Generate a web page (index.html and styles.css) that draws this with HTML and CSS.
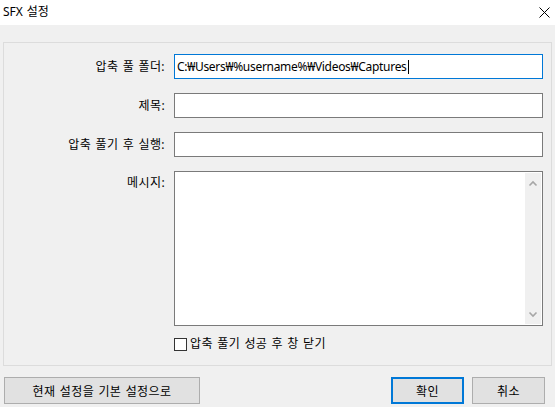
FILE: index.html
```html
<!DOCTYPE html>
<html>
<head>
  <meta charset="UTF-8">
  <title>SFX 설정</title>
  <link rel="stylesheet" href="styles.css">
</head>
<body>
  <div class="titleBar">
    <span class="title">SFX 설정</span>
    <svg class="closeIcon" width="11" height="11" viewBox="0 0 11 11">
      <path d="M0.5 0.5 L10.5 10.5 M10.5 0.5 L0.5 10.5" stroke="#000" stroke-width="1" fill="none"/>
    </svg>
  </div>

  <div class="dialog">
    <div class="groupBox">
      <div class="formGrid">
        <div class="label">압축 풀 폴더:</div>
        <div class="textBox focused">C:₩Users₩%username%₩Videos₩Captures<span class="caret"></span></div>

        <div class="label">제목:</div>
        <div class="textBox"></div>

        <div class="label">압축 풀기 후 실행:</div>
        <div class="textBox"></div>

        <div class="label labelTop">메시지:</div>
        <div class="textArea">
          <div class="scrollBar">
            <svg width="16" height="12" viewBox="0 0 16 12">
              <path d="M4.5 7.5 L8 4 L11.5 7.5" stroke="#a6a6a6" stroke-width="1.6" fill="none"/>
            </svg>
            <svg width="16" height="12" viewBox="0 0 16 12">
              <path d="M4.5 4.5 L8 8 L11.5 4.5" stroke="#a6a6a6" stroke-width="1.6" fill="none"/>
            </svg>
          </div>
        </div>
      </div>

      <div class="checkRow">
        <span class="checkBox"></span>
        <span>압축 풀기 성공 후 창 닫기</span>
      </div>
    </div>

    <div class="buttonRow">
      <div class="button wide">현재 설정을 기본 설정으로</div>
      <div class="spacer"></div>
      <div class="button default">확인</div>
      <div class="button">취소</div>
    </div>
  </div>
</body>
</html>
```

FILE: styles.css
```css
body {
  margin: 0;
  background-color: #f0f0f0;
  color: #000;
  font-family: "Noto Sans", "Noto Sans CJK KR", sans-serif;
  font-size: 12px;
  letter-spacing: 0.4px;
  word-spacing: 0.8px;
  width: 555px;
  height: 407px;
  overflow: hidden;
}

.titleBar {
  height: 25px;
  background-color: #fff;
  display: flex;
  align-items: center;
  padding: 0 5px 3px 3px;
  box-sizing: border-box;
}
.title {
  flex: 1;
  font-size: 12px;
  letter-spacing: 0;
}
.closeIcon {
  margin-top: 3px;
}

.dialog {
  padding-top: 17px;
}

.groupBox {
  margin-left: 3px;
  width: 549px;
  box-sizing: border-box;
  border: 1px solid #dcdcdc;
  padding: 11px 8px 13px 0px;
}

.formGrid {
  display: grid;
  grid-template-columns: 162px 369px;
  grid-template-rows: 25px 25px 25px 155px;
  column-gap: 8px;
  row-gap: 14px;
}

.label {
  text-align: right;
  padding-right: 1px;
  display: flex;
  align-items: center;
  justify-content: flex-end;
  line-height: 16px;
}
.labelTop {
  align-items: flex-start;
  padding-top: 4px;
}

.textBox {
  box-sizing: border-box;
  border: 1px solid #7a7a7a;
  background-color: #fff;
  padding: 0 2px;
  line-height: 23px;
  white-space: nowrap;
  letter-spacing: -0.3px;
  display: flex;
  align-items: center;
}
.textBox.focused {
  border-color: #0078d7;
}
.caret {
  display: inline-block;
  width: 1px;
  height: 14px;
  background-color: #000;
  margin-left: 1px;
}

.textArea {
  box-sizing: border-box;
  border: 1px solid #7a7a7a;
  background-color: #fff;
  padding: 1px;
  display: flex;
  justify-content: flex-end;
}
.scrollBar {
  width: 16px;
  background-color: #f0f0f0;
  display: flex;
  flex-direction: column;
  justify-content: space-between;
  padding: 5px 0 4px 0;
}

.checkRow {
  margin: 10px 0 0 170px;
  height: 16px;
  display: flex;
  align-items: center;
  line-height: 16px;
}
.checkBox {
  width: 13px;
  height: 13px;
  box-sizing: border-box;
  border: 1px solid #333;
  background-color: #fff;
  margin-right: 3px;
}

.buttonRow {
  display: flex;
  margin-top: 11px;
  padding: 0 10px 0 4px;
  gap: 8px;
}
.spacer {
  flex: 1;
}
.button {
  box-sizing: border-box;
  width: 73px;
  height: 27px;
  border: 1px solid #adadad;
  background-color: #e1e1e1;
  display: flex;
  align-items: center;
  justify-content: center;
}
.button.wide {
  width: 196px;
}
.button.default {
  border: 2px solid #0078d7;
}
```
